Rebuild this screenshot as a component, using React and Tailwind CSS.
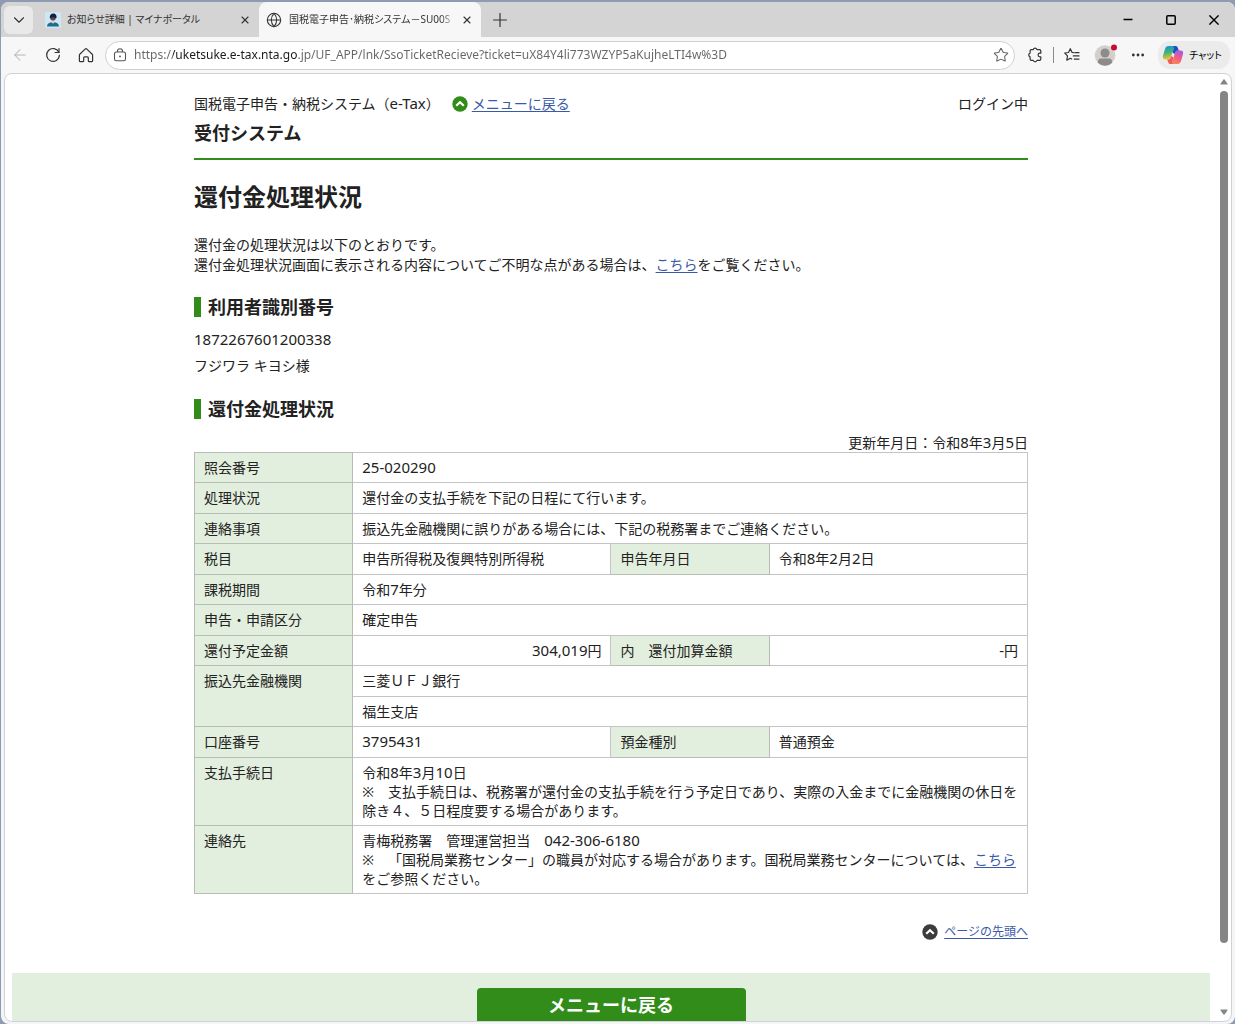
import { ArrowLeft, ChevronDown, Ellipsis, Globe, Plus, Star, X } from "lucide-react";

const URL_TEXT =
  "https://uketsuke.e-tax.nta.go.jp/UF_APP/lnk/SsoTicketRecieve?ticket=uX84Y4li773WZYP5aKujheLTI4w%3D";

// Half-width digits are drawn a little larger than the kanji around them
function Num({ children }) {
  return <span className="text-[15px]">{children}</span>;
}

function TextLink({ children, href = "#" }) {
  return (
    <a href={href} className="text-[#3a5aa8] underline underline-offset-2">
      {children}
    </a>
  );
}

function UpIcon({ className }) {
  return (
    <svg viewBox="0 0 16 16" className={`h-4 w-4 shrink-0 ${className}`} aria-hidden="true">
      <circle cx="8" cy="8" r="7.7" fill="currentColor" />
      <path d="M4.2 9.8 8 6.2l3.8 3.6" fill="none" stroke="#fff" strokeWidth="2.2" />
    </svg>
  );
}

function PersonIcon() {
  return (
    <svg viewBox="0 0 16 16" className="h-4 w-4 shrink-0" aria-hidden="true">
      <rect width="16" height="16" rx="1" fill="#cfe6f4" />
      <path d="M2 14.500c0-2.600 2-3.700 4.500-4.200L8 11.500l1.500-1.200c2.500.5 4.500 1.600 4.500 4.200z" fill="#1b6f8c" />
      <path d="M6.600 8h2.800v2.300L8 11.500l-1.400-1.200z" fill="#e9c9b4" />
      <circle cx="8" cy="5.600" r="2.900" fill="#4a4a5c" />
      <path d="M4.800 6C4.600 3.200 6 1.500 8.300 1.500s3.600 1.700 3.200 4.500c-1.500 0-2.700-.4-3.400-1.200C7.400 5.600 6.200 6 4.800 6z" fill="#15203c" />
    </svg>
  );
}

function ReloadIcon() {
  return (
    <svg viewBox="0 0 16 16" className="h-4 w-4" fill="none" stroke="currentColor" strokeWidth="1.2" strokeLinecap="round" aria-hidden="true">
      <path d="M13.800 5.200A6.400 6.400 0 1 0 14.400 8.300" />
      <path d="M14 1.600v3.900h-3.900" />
    </svg>
  );
}

function HomeIcon() {
  return (
    <svg viewBox="0 0 16 16" className="h-4 w-4" fill="none" stroke="currentColor" strokeWidth="1.2" strokeLinejoin="round" aria-hidden="true">
      <path d="M1.800 7.200 7.100 2.100a1.300 1.300 0 0 1 1.800 0l5.300 5.100c.3.300.4.600.4 1v5.500a1 1 0 0 1-1 1h-2.400a.9.9 0 0 1-.9-.9v-3a1 1 0 0 0-1-1H6.700a1 1 0 0 0-1 1v3a.9.9 0 0 1-.9.9H2.400a1 1 0 0 1-1-1V8.200c0-.4.100-.7.400-1z" />
    </svg>
  );
}

function LockIcon() {
  return (
    <svg viewBox="0 0 14 14" className="h-[14px] w-[14px]" fill="none" stroke="currentColor" strokeWidth="1.1" aria-hidden="true">
      <rect x="1.5" y="4" width="11" height="8.8" rx="1.8" />
      <path d="M4.500 4V3.200a2.500 2.500 0 0 1 5 0V4" />
      <circle cx="7" cy="8.4" r=".9" fill="currentColor" stroke="none" />
    </svg>
  );
}

function PuzzleIcon() {
  return (
    <svg viewBox="0 0 16 16" className="h-4 w-4" fill="none" stroke="currentColor" strokeWidth="1.2" strokeLinejoin="round" aria-hidden="true">
      <path d="M6.200 2.600a2 2 0 0 1 3.800 0h2.500a1.300 1.300 0 0 1 1.300 1.300v2.300h-.9a1.800 1.800 0 0 0 0 3.600h.9v2.300a1.300 1.300 0 0 1-1.300 1.300H10a2 2 0 0 1-3.800 0H4.400a1.300 1.300 0 0 1-1.300-1.300V9.900a2 2 0 0 1 0-3.800V3.900a1.300 1.300 0 0 1 1.300-1.300z" />
    </svg>
  );
}

function FavoritesIcon() {
  return (
    <svg viewBox="0 0 16 16" className="h-4 w-4" fill="none" stroke="currentColor" strokeWidth="1.2" strokeLinecap="round" strokeLinejoin="round" aria-hidden="true">
      <path d="M9.400 5.700 8.100 5.500 6.300 1.700 4.500 5.500.7 6l2.800 2.900-.7 4.300 3.500-1.900 1.400.7" />
      <path d="M10.800 5.700H15M9.300 8.900H15M10.300 12.100H15" />
    </svg>
  );
}

function AvatarIcon() {
  return (
    <svg viewBox="0 0 24 22" className="h-[22px] w-6" aria-hidden="true">
      <circle cx="11" cy="11.500" r="10.300" fill="#d2cfcd" />
      <circle cx="11" cy="9" r="4.500" fill="#8e8c8a" />
      <path d="M3.800 18.800c0-3 1.200-4.200 3.200-4.200h8c2 0 3.200 1.200 3.200 4.200A10.300 10.300 0 0 1 11 21.800a10.300 10.300 0 0 1-7.200-3z" fill="#8e8c8a" />
      <circle cx="20" cy="3.600" r="3" fill="#c50f2f" />
    </svg>
  );
}

function CopilotIcon() {
  return (
    <svg viewBox="0 0 22 20" className="h-5 w-[22px] shrink-0" aria-hidden="true">
      <defs>
        <linearGradient id="coolSide" x1="0" y1="0" x2="0.2" y2="1">
          <stop offset="0" stopColor="#1a90e0" />
          <stop offset="0.5" stopColor="#35b47c" />
          <stop offset="1" stopColor="#f2c230" />
        </linearGradient>
        <linearGradient id="warmSide" x1="0.8" y1="0" x2="0.3" y2="1">
          <stop offset="0" stopColor="#a45be8" />
          <stop offset="0.5" stopColor="#ef5a8a" />
          <stop offset="1" stopColor="#fb8a4a" />
        </linearGradient>
      </defs>
      <path d="M6.500 1h7.300c-1.200.2-1.800 1.300-2.300 3L9 12c-.5 1.700-1.300 2.600-3 2.600H3.500C1.200 14.600.4 13 1 10.800l2-6.900C3.600 2 4.600 1 6.500 1z" fill="url(#coolSide)" />
      <path d="M15.500 19H8.200c1.200-.2 1.800-1.300 2.300-3L13 8c.5-1.700 1.300-2.600 3-2.600h2.500c2.300 0 3.100 1.600 2.500 3.800l-2 6.900c-.6 1.900-1.600 2.900-3.500 2.900z" fill="url(#warmSide)" />
      <path d="M11 1h2.800c1.300.2 1.900 1.200 2.300 2.800.2.900.6 1.400 1.200 1.600H16c-1.700 0-2.500.9-3 2.600l-.3 1-2.200-1.600 1-3.400c.5-1.700 0-2.600-.5-3z" fill="#1f4fc4" />
      <path d="M11 19H8.200c-1.300-.2-1.900-1.200-2.300-2.800-.2-.9-.6-1.400-1.200-1.600H6c1.700 0 2.500-.9 3-2.600l.3-1 2.200 1.600-1 3.400c-.5 1.700 0 2.600.5 3z" fill="#ee5a5a" />
    </svg>
  );
}

function TabStrip() {
  return (
    <div className="flex h-[35px] shrink-0 items-center bg-[#d4d4d4] text-[#333]">
      <button aria-label="タブ操作メニュー" className="ml-[3px] flex h-7 w-[29px] items-center justify-center rounded-md bg-[#e9e9e9]">
        <ChevronDown className="h-[18px] w-[18px]" strokeWidth={1.5} />
      </button>
      <div className="flex w-[226px] items-center pl-3 pr-2">
        <PersonIcon />
        <span className="ml-[6px] flex-1 whitespace-nowrap text-[10px] [font-feature-settings:'palt']">
          お知らせ詳細 | マイナポータル
        </span>
        <button aria-label="タブを閉じる">
          <X className="h-3 w-3" strokeWidth={2.2} />
        </button>
      </div>
      <div className="flex h-full w-[222px] items-center rounded-t-lg bg-[#f7f7f7] pl-[7px] pr-2">
        <Globe className="h-4 w-4 shrink-0" strokeWidth={1.6} />
        <span className="ml-[7px] flex-1 whitespace-nowrap text-[10px] [font-feature-settings:'palt'] [mask-image:linear-gradient(90deg,#000_90%,transparent)]">
          国税電子申告･納税システム－SU00S
        </span>
        <button aria-label="タブを閉じる" className="ml-1">
          <X className="h-3 w-3" strokeWidth={2.2} />
        </button>
      </div>
      <button aria-label="新しいタブ" className="ml-2">
        <Plus className="h-[22px] w-[22px]" strokeWidth={1.3} />
      </button>
      <div className="ml-auto flex items-center text-black">
        <button aria-label="最小化" className="flex h-8 w-[43px] items-center justify-center">
          <svg viewBox="0 0 10 10" className="h-[10px] w-[10px]" stroke="currentColor" strokeWidth="1.5">
            <path d="M.5 4.500h9" />
          </svg>
        </button>
        <button aria-label="最大化" className="flex h-8 w-[43px] items-center justify-center">
          <svg viewBox="0 0 10 10" className="h-[10px] w-[10px]" fill="none" stroke="currentColor" strokeWidth="1.5">
            <rect x=".8" y=".8" width="8.4" height="8.4" rx="1" />
          </svg>
        </button>
        <button aria-label="閉じる" className="flex h-8 w-[43px] items-center justify-center">
          <svg viewBox="0 0 10 10" className="h-[10px] w-[10px]" stroke="currentColor" strokeWidth="1.4">
            <path d="M.4.400l9.200 9.200M9.600.4.400 9.600" />
          </svg>
        </button>
      </div>
    </div>
  );
}

function Toolbar() {
  return (
    <div className="flex h-9 shrink-0 items-center bg-[#f7f7f7] pl-[10px] pr-[5px] text-[#333]">
      <button aria-label="戻る" className="text-[#b5b5b5]">
        <ArrowLeft className="h-[18px] w-[18px]" strokeWidth={1.4} />
      </button>
      <button aria-label="更新" className="ml-4">
        <ReloadIcon />
      </button>
      <button aria-label="ホーム" className="ml-[17px]">
        <HomeIcon />
      </button>
      <div className="ml-[11px] flex h-[29px] flex-1 items-center rounded-full border border-[#d0d0d0] bg-white pl-[7px] pr-[5px]">
        <span className="text-[#555]">
          <LockIcon />
        </span>
        {/* the host part of the address is darker than the rest */}
        <input
          aria-label="アドレス"
          readOnly
          value={URL_TEXT}
          className="ml-[7px] min-w-0 flex-1 bg-[linear-gradient(90deg,#666_39px,#1b1b1b_39px,#1b1b1b_163px,#666_163px)] bg-clip-text text-[12px] text-transparent outline-none"
        />
        <button aria-label="お気に入りに追加" className="text-[#666]">
          <Star className="h-4 w-4" strokeWidth={1.6} />
        </button>
      </div>
      <button aria-label="拡張機能" className="ml-3">
        <PuzzleIcon />
      </button>
      <div className="ml-[10px] h-4 w-px bg-[#8a8a8a]" />
      <button aria-label="お気に入り" className="ml-[10px]">
        <FavoritesIcon />
      </button>
      <button aria-label="プロファイル" className="ml-[14px]">
        <AvatarIcon />
      </button>
      <button aria-label="設定など" className="ml-3">
        <Ellipsis className="h-4 w-4" strokeWidth={2.2} />
      </button>
      <button className="ml-3 flex h-7 items-center gap-[5px] rounded-xl bg-[#ebebeb] pl-1 pr-2 text-[10px] text-black [font-feature-settings:'palt']">
        <CopilotIcon />
        チャット
      </button>
    </div>
  );
}

function Heading({ children }) {
  return (
    <h2 className="flex h-5 items-center gap-[7px] text-[18px] font-bold">
      <span className="h-5 w-[7px] bg-[#318c1a]" />
      {children}
    </h2>
  );
}

function Th(props) {
  return (
    <th
      className="border border-[#b5bdb5] bg-[#e2efde] py-[5px] pl-[9px] pr-1 text-left align-top font-normal"
      {...props}
    />
  );
}

function Td({ right, ...props }) {
  return (
    <td
      className={`border border-[#c4c4c4] py-[5px] pl-[9px] align-top ${right ? "pr-[9px] text-right" : "pr-1"}`}
      {...props}
    />
  );
}

function Row({ children }) {
  return <tr className="odd:h-[30px] even:h-[31px]">{children}</tr>;
}

function RefundTable() {
  return (
    <table className="w-full table-fixed border-collapse leading-[19px] [text-spacing-trim:space-all]">
      <colgroup>
        <col className="w-[19%]" />
        <col className="w-[31%]" />
        <col className="w-[19%]" />
        <col className="w-[31%]" />
      </colgroup>
      <tbody>
        <Row>
          <Th>照会番号</Th>
          <Td colSpan={3}><Num>25-020290</Num></Td>
        </Row>
        <Row>
          <Th>処理状況</Th>
          <Td colSpan={3}>還付金の支払手続を下記の日程にて行います。</Td>
        </Row>
        <Row>
          <Th>連絡事項</Th>
          <Td colSpan={3}>振込先金融機関に誤りがある場合には、下記の税務署までご連絡ください。</Td>
        </Row>
        <Row>
          <Th>税目</Th>
          <Td>申告所得税及復興特別所得税</Td>
          <Th>申告年月日</Th>
          <Td>令和<Num>8</Num>年<Num>2</Num>月<Num>2</Num>日</Td>
        </Row>
        <Row>
          <Th>課税期間</Th>
          <Td colSpan={3}>令和<Num>7</Num>年分</Td>
        </Row>
        <Row>
          <Th>申告・申請区分</Th>
          <Td colSpan={3}>確定申告</Td>
        </Row>
        <Row>
          <Th>還付予定金額</Th>
          <Td right><Num>304,019</Num>円</Td>
          <Th>内　還付加算金額</Th>
          <Td right><Num>-</Num>円</Td>
        </Row>
        <Row>
          <Th rowSpan={2}>振込先金融機関</Th>
          <Td colSpan={3}>三菱ＵＦＪ銀行</Td>
        </Row>
        <Row>
          <Td colSpan={3}>福生支店</Td>
        </Row>
        <Row>
          <Th>口座番号</Th>
          <Td><Num>3795431</Num></Td>
          <Th>預金種別</Th>
          <Td>普通預金</Td>
        </Row>
        <Row>
          <Th>支払手続日</Th>
          <Td colSpan={3}>
            令和<Num>8</Num>年<Num>3</Num>月<Num>10</Num>日
            <br />
            ※　支払手続日は、税務署が還付金の支払手続を行う予定日であり、実際の入金までに金融機関の休日を除き４、５日程度要する場合があります。
          </Td>
        </Row>
        <Row>
          <Th>連絡先</Th>
          <Td colSpan={3}>
            青梅税務署　管理運営担当　<Num>042-306-6180</Num>
            <br />
            ※　「国税局業務センター」の職員が対応する場合があります。国税局業務センターについては、<TextLink>こちら</TextLink>をご参照ください。
          </Td>
        </Row>
      </tbody>
    </table>
  );
}

function Page() {
  return (
    <div className="min-w-0 flex-1 overflow-hidden px-[7px] text-[14px] leading-[19px] text-[#222]">
      <div className="mx-auto max-w-[834px]">
        <header className="border-b-2 border-[#318c1a] pb-[13px] pt-5">
          <div className="flex items-center">
            <span>国税電子申告・納税システム（<Num>e-Tax</Num>）</span>
            <UpIcon className="ml-3 mr-1 text-[#318c1a]" />
            <TextLink>メニューに戻る</TextLink>
            <span className="ml-auto">ログイン中</span>
          </div>
          <p className="mt-2 text-[18px] font-bold leading-6">受付システム</p>
        </header>

        <h1 className="mt-[21px] text-[24px] font-bold leading-8">還付金処理状況</h1>
        <p className="mt-[22px] leading-5">
          還付金の処理状況は以下のとおりです。
          <br />
          還付金処理状況画面に表示される内容についてご不明な点がある場合は、<TextLink>こちら</TextLink>をご覧ください。
        </p>

        <section className="mt-[22px]">
          <Heading>利用者識別番号</Heading>
          <p className="mt-[13px]"><Num>1872267601200338</Num></p>
          <p className="mt-[7px]">フジワラ キヨシ様</p>
        </section>

        <section className="mt-6">
          <Heading>還付金処理状況</Heading>
          <p className="mt-[14px] text-right">
            更新年月日：令和<Num>8</Num>年<Num>3</Num>月<Num>5</Num>日
          </p>
          <RefundTable />
        </section>

        <div className="mt-7 flex items-center justify-end gap-[6px] text-[12px]">
          <UpIcon className="text-[#3c3c3c]" />
          <TextLink>ページの先頭へ</TextLink>
        </div>
      </div>

      <footer className="mt-8 flex justify-center bg-[#e2efde] pb-4 pt-[15px]">
        <button className="h-10 w-[269px] rounded bg-[#318c1a] pb-[6px] text-[18px] font-bold text-white">
          メニューに戻る
        </button>
      </footer>
    </div>
  );
}

function Scrollbar() {
  return (
    <div className="flex w-[14px] shrink-0 flex-col items-center pb-[6px] pt-[5px] text-[#858585]" aria-hidden="true">
      <svg viewBox="0 0 8 6" className="h-[6px] w-2" fill="currentColor">
        <path d="M3.300.7.600 4.500c-.3.500 0 1 .6 1h5.600c.6 0 .9-.5.600-1L4.700.7c-.4-.5-1-.5-1.400 0z" />
      </svg>
      <div className="mt-[6px] w-2 grow-[13] rounded-full bg-[#858585]" />
      <div className="grow" />
      <svg viewBox="0 0 8 6" className="h-[6px] w-2" fill="currentColor">
        <path d="M3.300 5.300.600 1.500C.3 1 .6.500 1.200.5h5.600c.6 0 .9.500.6 1L4.700 5.300c-.4.500-1 .5-1.400 0z" />
      </svg>
    </div>
  );
}

export default function App() {
  return (
    <div lang="ja" className="h-screen bg-[#8e9bb0] pl-px pt-[2px] font-['Noto_Sans','Noto_Sans_CJK_JP',sans-serif]">
      <div className="flex h-full flex-col overflow-hidden rounded-lg bg-[#f4f5f7]">
        <TabStrip />
        <Toolbar />
        <main className="mb-[2px] ml-[3px] mr-[3px] flex min-h-0 flex-1 overflow-hidden rounded-lg border border-[#cfd2d6] bg-white">
          <Page />
          <Scrollbar />
        </main>
      </div>
    </div>
  );
}
